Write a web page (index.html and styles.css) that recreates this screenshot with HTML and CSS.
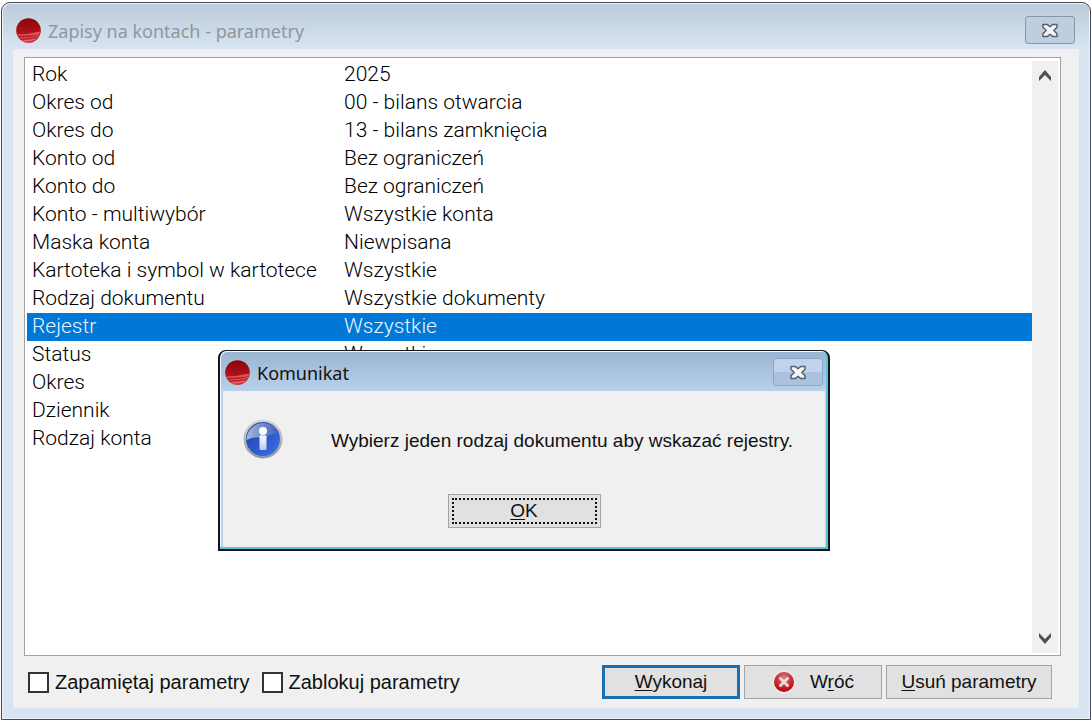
FILE: index.html
```html
<!DOCTYPE html>
<html lang="pl">
  <head>
    <meta charset="UTF-8" />
    <meta name="viewport" content="width=device-width, initial-scale=1.0" />
    <title>Zapisy na kontach - parametry</title>
    <link rel="stylesheet" href="styles.css">
  </head>
  <body>
    <svg class="symbols" aria-hidden="true">
      <defs>
        <linearGradient id="red" x1="0" y1="0" x2="0" y2="1">
          <stop offset="0" stop-color="#86070b" />
          <stop offset="0.5" stop-color="#a90f16" />
          <stop offset="1" stop-color="#cf2530" />
        </linearGradient>
        <symbol id="logo" viewBox="0 0 25 25">
          <circle cx="12.5" cy="12.5" r="12.3" fill="url(#red)" />
          <path d="M1 16.500Q12 16.500 24 13.500L23.500 16.500Q13 17.500 2 18z" fill="#d9535b" />
          <path d="M3 19.500Q13 19.500 23 17L22.500 18.500Q13 20.500 4 20.500z" fill="#d9535b" />
          <path d="M6 22Q14 22 21.500 20L19 22Q13 24 8 23.500z" fill="#e8626a" />
        </symbol>
        <symbol id="close" viewBox="0 0 18 16">
          <path d="M1.500 1.500h4.500L9 4l3-2.500h4.500v3L13 8l3.500 3.500v3H12L9 12l-3 2.500H1.500v-3L5 8 1.500 4.500z" fill="#f4f6f9" stroke="#5a606b" stroke-width="1.600" stroke-linejoin="round" />
        </symbol>
      </defs>
    </svg>

    <div class="window">
      <div class="titlebar">
        <svg class="logo"><use href="#logo" /></svg>
        <span class="title">Zapisy na kontach - parametry</span>
        <button class="close" aria-label="Zamknij"><svg><use href="#close" /></svg></button>
      </div>
      <div class="content">
        <div class="list">
          <table class="params">
            <tbody>
              <tr><td>Rok</td><td>2025</td></tr>
              <tr><td>Okres od</td><td>00 - bilans otwarcia</td></tr>
              <tr><td>Okres do</td><td>13 - bilans zamknięcia</td></tr>
              <tr><td>Konto od</td><td>Bez ograniczeń</td></tr>
              <tr><td>Konto do</td><td>Bez ograniczeń</td></tr>
              <tr><td>Konto - multiwybór</td><td>Wszystkie konta</td></tr>
              <tr><td>Maska konta</td><td>Niewpisana</td></tr>
              <tr><td>Kartoteka i symbol w kartotece</td><td>Wszystkie</td></tr>
              <tr><td>Rodzaj dokumentu</td><td>Wszystkie dokumenty</td></tr>
              <tr class="selected"><td>Rejestr</td><td>Wszystkie</td></tr>
              <tr><td>Status</td><td>Wszystkie</td></tr>
              <tr><td>Okres</td><td></td></tr>
              <tr><td>Dziennik</td><td></td></tr>
              <tr><td>Rodzaj konta</td><td></td></tr>
            </tbody>
          </table>
          <div class="scrollbar">
            <svg viewBox="0 0 14 12"><path d="M1 8 7 1l6 7v4L7 6l-6 6z" /></svg>
            <svg viewBox="0 0 14 12"><path d="M1 0 7 6l6-6v4l-6 7-6-7z" /></svg>
          </div>
        </div>
        <div class="footer">
          <label class="check"><input type="checkbox">Zapamiętaj parametry</label>
          <label class="check"><input type="checkbox">Zablokuj parametry</label>
          <div class="buttons">
            <button class="btn primary"><span><u>W</u>ykonaj</span></button>
            <button class="btn">
              <svg class="cancel" viewBox="0 0 24 24">
                <defs>
                  <radialGradient id="cancel-fill" cx="0.5" cy="0.3" r="0.7">
                    <stop offset="0" stop-color="#d98080" />
                    <stop offset="0.5" stop-color="#c5383c" />
                    <stop offset="1" stop-color="#c0000a" />
                  </radialGradient>
                </defs>
                <circle cx="12" cy="12" r="11.500" fill="#eceaea" />
                <circle cx="12" cy="12" r="10" fill="url(#cancel-fill)" />
                <path d="M8.500 8.500l7 7m0-7l-7 7" stroke="#f0dada" stroke-width="3" stroke-linecap="round" />
              </svg>
              <span>W<u>r</u>óć</span>
            </button>
            <button class="btn wide"><span><u>U</u>suń parametry</span></button>
          </div>
        </div>
      </div>
    </div>

    <div class="dialog" role="dialog" aria-labelledby="dialog-title">
      <div class="dialog-bar">
        <svg class="logo"><use href="#logo" /></svg>
        <span class="title" id="dialog-title">Komunikat</span>
        <button class="close" aria-label="Zamknij"><svg><use href="#close" /></svg></button>
      </div>
      <div class="dialog-body">
        <div class="message">
          <svg class="info" viewBox="0 0 40 40">
            <defs>
              <linearGradient id="ring" x1="0" y1="0" x2="0" y2="1">
                <stop offset="0" stop-color="#d8d8d8" />
                <stop offset="1" stop-color="#8f959f" />
              </linearGradient>
              <linearGradient id="blue" x1="0" y1="0" x2="1" y2="1">
                <stop offset="0" stop-color="#1a3fa0" />
                <stop offset="1" stop-color="#3f6fee" />
              </linearGradient>
              <linearGradient id="gloss" x1="0" y1="0" x2="1" y2="0">
                <stop offset="0" stop-color="#a5b9d8" />
                <stop offset="1" stop-color="#3a60b8" />
              </linearGradient>
              <linearGradient id="stem" x1="0" y1="0" x2="0" y2="1">
                <stop offset="0" stop-color="#fff" />
                <stop offset="1" stop-color="#b9c8ee" />
              </linearGradient>
            </defs>
            <circle cx="20" cy="20" r="19.500" fill="url(#ring)" />
            <circle cx="20" cy="20" r="17" fill="url(#blue)" />
            <path d="M3.500 21A17 17 0 0 1 36 14Q28 15 20 18Q9 18 3.500 21z" fill="url(#gloss)" />
            <circle cx="20" cy="12" r="4" fill="#fff" />
            <rect x="16.500" y="16.500" width="7" height="14.500" rx="1" fill="url(#stem)" />
          </svg>
          <p>Wybierz jeden rodzaj dokumentu aby wskazać rejestry.</p>
        </div>
        <button class="btn ok"><span><u>O</u>K</span></button>
      </div>
    </div>
  </body>
</html>
```
FILE: styles.css
```css
* {
  box-sizing: border-box;
}
body {
  margin: 0;
  padding: 2px 1px 1px 1px;
  height: 100vh;
  background-color: white;
  color: #111;
  font-family: "Liberation Sans", Arial, sans-serif;
  font-size: 20px;
}
.symbols {
  position: absolute;
  width: 0;
  height: 0;
}
.window {
  height: 100%;
  display: flex;
  flex-direction: column;
  padding: 0 11px 11px 11px;
  border: 1px solid #454850;
  border-radius: 9px 9px 0 0;
  background: linear-gradient(#bccbda, #d8e4f1 46px);
  box-shadow: inset 1px 1px 0 #eef4fa, inset -1px -1px 0 #eef4fa;
}
.titlebar {
  display: flex;
  align-items: center;
  height: 46px;
  padding: 8px 4px 0 3px;
}
.logo {
  width: 25px;
  height: 25px;
}
.title {
  flex: 1;
  padding: 1px 0 0 7px;
  font-family: "Noto Sans", sans-serif;
  font-size: 18px;
  line-height: 24px;
}
.titlebar .title {
  color: #8f979f;
}
.close {
  display: flex;
  align-items: center;
  justify-content: center;
  width: 50px;
  height: 28px;
  padding: 0;
  border: 1px solid #8496ac;
  border-radius: 3px;
  background: #bfcedf;
}
.close svg {
  width: 18px;
  height: 15px;
}
.content {
  flex: 1;
  display: flex;
  flex-direction: column;
  padding: 8px 18px 4px 11px;
  background-color: #f0f0f0;
}
.list {
  flex: 1;
  display: flex;
  border: 1px solid #a0a4aa;
  background-color: white;
  padding: 3px 2px 2px 2px;
}
.params {
  flex: 1;
  align-self: flex-start;
  border-collapse: collapse;
  table-layout: fixed;
  color: black;
  font-family: Roboto, sans-serif;
  font-size: 21px;
  font-weight: 300;
}
.params td {
  height: 28px;
  padding: 0 0 2px 5px;
  line-height: 26px;
  white-space: nowrap;
}
.params td:first-child {
  width: 312px;
}
.selected {
  background-color: #0078d7;
  color: #e8f4ff;
}
.scrollbar {
  display: flex;
  flex-direction: column;
  justify-content: space-between;
  align-items: center;
  width: 26px;
  padding: 8px 0;
  background-color: #f0f0f0;
}
.scrollbar svg {
  width: 14px;
  height: 12px;
  fill: #505050;
}
.footer {
  display: flex;
  align-items: center;
  gap: 12px;
  height: 48px;
  padding: 4px 9px 0 4px;
}
.check {
  display: flex;
  align-items: center;
  gap: 6px;
}
.check input {
  appearance: none;
  width: 21px;
  height: 21px;
  margin: 0;
  border: 2px solid #333;
  background-color: white;
}
.buttons {
  display: flex;
  gap: 4px;
  margin-left: auto;
}
.btn {
  display: flex;
  align-items: center;
  justify-content: center;
  gap: 14px;
  width: 138px;
  height: 34px;
  padding: 0;
  border: 1px solid #a4a4a4;
  background-color: #e1e1e1;
  color: #111;
  font-family: inherit;
  font-size: 19px;
}
.btn u {
  text-underline-offset: 2px;
}
.primary {
  border: 3px solid #1a6fb0;
}
.wide {
  width: 166px;
}
.cancel {
  width: 24px;
  height: 24px;
}
.dialog {
  position: absolute;
  top: 350px;
  left: 218px;
  width: 612px;
  padding: 2px 3px;
  border: 2px solid #10161c;
  border-top-width: 1px;
  border-radius: 8px 8px 0 0;
  background: linear-gradient(#99b4d1, #b9d1ea 40px);
  box-shadow: inset -2px -2px 0 #5cc4d4, inset 1px 1px 0 #f4f8fc;
}
.dialog-bar {
  display: flex;
  align-items: center;
  height: 38px;
  padding-left: 2px;
  padding-right: 2px;
}
.dialog-bar .close {
  border-color: #8ba6c8;
  background: linear-gradient(#bfd3ea 50%, #a9c2de 50%);
}
.dialog-body {
  display: flex;
  flex-direction: column;
  align-items: center;
  height: 156px;
  padding-top: 28px;
  background-color: #f0f0f0;
}
.message {
  display: flex;
  align-items: center;
  align-self: stretch;
  gap: 48px;
  padding-left: 20px;
}
.message p {
  margin: 0;
  padding-top: 4px;
  font-size: 19px;
}
.info {
  width: 40px;
  height: 40px;
}
.ok {
  width: 153px;
  margin-top: 35px;
  outline: 2px dotted #111;
  outline-offset: -6px;
}
```
